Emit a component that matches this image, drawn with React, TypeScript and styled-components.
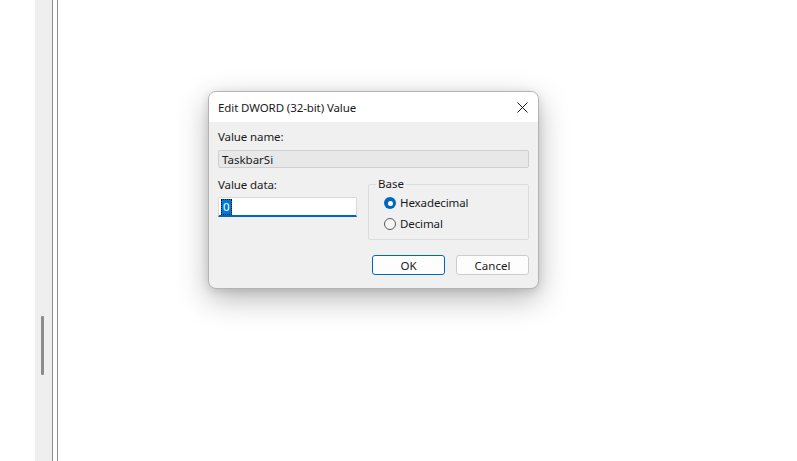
import React from "react";
import styled, { createGlobalStyle } from "styled-components";

const Global = createGlobalStyle`
  html, body { margin: 0; padding: 0; height: 100%; background: #ffffff; }
  #root { height: 100%; }
  * { box-sizing: border-box; }
`;

const Page = styled.div`
  position: relative;
  width: 100%;
  height: 461px;
  display: flex;
  overflow: hidden;
  font-family: "Noto Sans", "Segoe UI", sans-serif;
`;

const Gutter = styled.div`
  width: 35px;
  background: #ffffff;
`;

const ScrollTrack = styled.div`
  width: 17px;
  background: #efefef;
  display: flex;
  justify-content: center;
  padding-top: 316px;
`;

const Thumb = styled.div`
  width: 3px;
  height: 59px;
  margin-left: -2px;
  background: #8c8c8c;
  border-radius: 1px;
`;

const Rule = styled.div`
  width: 1px;
  background: #8e8e96;
`;

const Between = styled.div`
  width: 4px;
  background: #ffffff;
`;

const Canvas = styled.div`
  flex: 1;
  background: #ffffff;
`;

const Window = styled.div`
  position: absolute;
  left: 208px;
  top: 91px;
  width: 331px;
  height: 198px;
  border-radius: 8px;
  background: #f0f0f0;
  border: 1px solid #b4b4b4;
  box-shadow: 0 10px 30px rgba(0, 0, 0, 0.28), 0 2px 8px rgba(0, 0, 0, 0.12);
  overflow: hidden;
  display: flex;
  flex-direction: column;
  color: #000;
  font-size: 11.5px;
`;

const TitleBar = styled.div`
  height: 30px;
  background: #ffffff;
  display: flex;
  align-items: center;
  justify-content: space-between;
  padding: 0 10px 0 9px;
  flex-shrink: 0;
`;

const Title = styled.span`
  font-size: 11.5px;
  letter-spacing: -0.1px;
  color: #1a1a1a;
`;

const CloseBtn = styled.div`
  width: 12px;
  height: 12px;
  display: flex;
  align-items: center;
  justify-content: center;
`;

const Body = styled.div`
  flex: 1;
  padding: 7px 9px 13px 9px;
  display: flex;
  flex-direction: column;
`;

const Label = styled.div`
  font-size: 11.5px;
  line-height: 16px;
  color: #1a1a1a;
  letter-spacing: -0.1px;
`;

const NameBox = styled.div`
  margin-top: 5px;
  height: 18px;
  background: #e8e8e8;
  border: 1px solid #cfcfcf;
  border-radius: 2px;
  padding: 0 3px;
  display: flex;
  align-items: center;
  font-size: 11.5px;
  color: #1a1a1a;
`;

const Row = styled.div`
  display: flex;
  margin-top: 9px;
  gap: 11px;
`;

const LeftCol = styled.div`
  width: 139px;
  display: flex;
  flex-direction: column;
`;

const DataInput = styled.div`
  margin-top: 4px;
  height: 20px;
  background: #ffffff;
  border: 1px solid #d9d9d9;
  border-bottom: 2px solid #0067c0;
  border-radius: 2px 2px 0 0;
  display: flex;
  align-items: center;
  padding-left: 2px;
`;

const Selected = styled.span`
  background: #0078d7;
  color: #ffffff;
  font-size: 11.5px;
  line-height: 14px;
  padding: 0 1px;
  border: 1px dotted #0a0a0a;
`;

const Group = styled.div`
  position: relative;
  width: 161px;
  height: 56px;
  margin-top: 7px;
  border: 1px solid #dcdcdc;
  border-radius: 2px;
  padding: 10px 0 0 15px;
  display: flex;
  flex-direction: column;
  gap: 5px;
`;

const Legend = styled.span`
  position: absolute;
  top: -9px;
  left: 7px;
  padding: 0 2px;
  background: #f0f0f0;
  font-size: 11.5px;
  line-height: 16px;
  color: #1a1a1a;
`;

const RadioRow = styled.div`
  display: flex;
  align-items: center;
  gap: 4px;
  height: 16px;
`;

const RadioDot = styled.span<{ $on?: boolean }>`
  width: 12px;
  height: 12px;
  border-radius: 50%;
  flex-shrink: 0;
  ${(p) =>
    p.$on
      ? `background: #0067c0; display:flex; align-items:center; justify-content:center;`
      : `background: #f5f5f5; border: 1px solid #5a5a5a;`}
`;

const Inner = styled.span`
  width: 5px;
  height: 5px;
  border-radius: 50%;
  background: #ffffff;
`;

const Buttons = styled.div`
  margin-top: auto;
  display: flex;
  justify-content: flex-end;
  gap: 11px;
`;

const Button = styled.div<{ $primary?: boolean }>`
  width: 73px;
  height: 20px;
  border-radius: 3px;
  background: #fdfdfd;
  border: 1px solid ${(p) => (p.$primary ? "#0067c0" : "#cccccc")};
  display: flex;
  align-items: center;
  justify-content: center;
  font-size: 11.5px;
  color: #1a1a1a;
`;

export default function App() {
  return (
    <>
      <Global />
      <Page>
        <Gutter />
        <ScrollTrack>
          <Thumb />
        </ScrollTrack>
        <Rule />
        <Between />
        <Rule />
        <Canvas />
        <Window>
          <TitleBar>
            <Title>Edit DWORD (32-bit) Value</Title>
            <CloseBtn>
              <svg width="11" height="11" viewBox="0 0 11 11">
                <path d="M0.5 0.5 L10.5 10.5 M10.5 0.5 L0.5 10.5" stroke="#1a1a1a" strokeWidth="1" />
              </svg>
            </CloseBtn>
          </TitleBar>
          <Body>
            <Label>Value name:</Label>
            <NameBox>TaskbarSi</NameBox>
            <Row>
              <LeftCol>
                <Label>Value data:</Label>
                <DataInput>
                  <Selected>0</Selected>
                </DataInput>
              </LeftCol>
              <Group>
                <Legend>Base</Legend>
                <RadioRow>
                  <RadioDot $on>
                    <Inner />
                  </RadioDot>
                  <Label>Hexadecimal</Label>
                </RadioRow>
                <RadioRow>
                  <RadioDot />
                  <Label>Decimal</Label>
                </RadioRow>
              </Group>
            </Row>
            <Buttons>
              <Button $primary>OK</Button>
              <Button>Cancel</Button>
            </Buttons>
          </Body>
        </Window>
      </Page>
    </>
  );
}
